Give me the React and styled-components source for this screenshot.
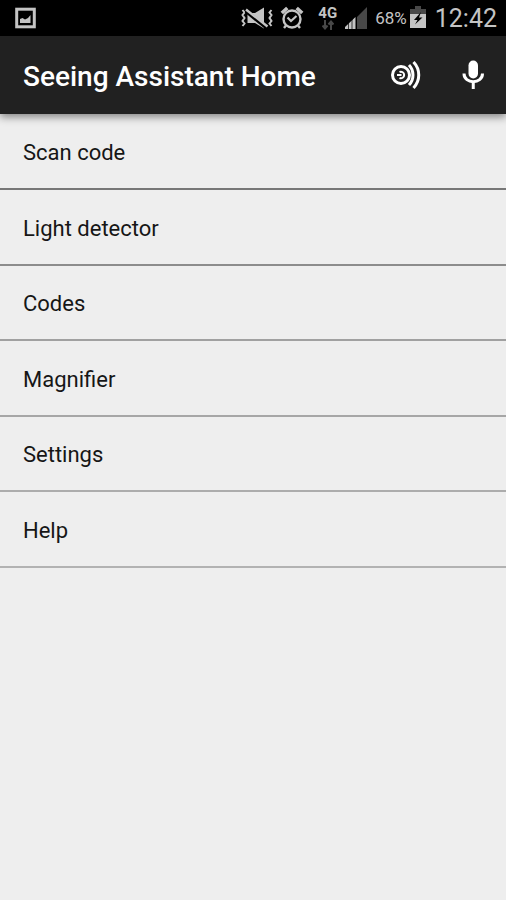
import React from 'react'
import styled, { createGlobalStyle } from 'styled-components'

const GlobalStyle = createGlobalStyle`
  body {
    margin: 0;
    background-color: #eeeeee;
    font-family: Roboto, 'Liberation Sans', sans-serif;
  }
`

const Screen = styled.div`
  min-height: 100vh;
  background-color: #eeeeee;
`

const StatusBar = styled.div`
  display: flex;
  align-items: center;
  height: 36px;
  padding: 0 9px 0 14px;
  background-color: #000000;
  color: #c4c4c4;
`

const StatusIcons = styled.div`
  display: flex;
  align-items: center;
  gap: 7px;
  margin-left: auto;
`

const Network = styled.div`
  display: flex;
  flex-direction: column;
  align-items: center;
  margin-left: 7px;
  font-size: 15px;
  font-weight: 700;
  line-height: 14px;
`

const Battery = styled.div`
  display: flex;
  align-items: center;
  gap: 3px;
  font-size: 17px;
`

const Clock = styled.time`
  margin-left: 2px;
  padding-top: 2px;
  font-size: 25px;
  line-height: 34px;
`

const AppBar = styled.header`
  position: relative;
  display: flex;
  align-items: center;
  gap: 36px;
  height: 78px;
  padding: 0 18px 0 23px;
  background-color: #212121;
  color: #ffffff;
  box-shadow: 0 3px 8px rgba(0, 0, 0, 0.45);
`

const Title = styled.h1`
  flex: 1;
  margin: 0;
  padding-top: 2px;
  font-size: 28px;
  font-weight: 500;
  white-space: nowrap;
`

const IconButton = styled.button`
  display: flex;
  padding: 0;
  border: none;
  background: none;
  color: inherit;
  cursor: pointer;
`

const Menu = styled.ul`
  margin: 0;
  padding: 1px 0 0;
  list-style: none;
`

const MenuItem = styled.li`
  height: 75px;
  box-sizing: border-box;
  border-bottom: 2px solid ${props => props.$line};

  &:nth-child(even) {
    height: 76px;
  }
`

const MenuLink = styled.a`
  display: flex;
  align-items: center;
  height: 100%;
  padding: 2px 23px 0;
  box-sizing: border-box;
  color: #161616;
  font-size: 22px;
  text-decoration: none;
`

const PictureIcon = () => (
  <svg width='22' height='22' viewBox='0 0 22 22' aria-hidden='true'>
    <rect x='2.7' y='2.2' width='17.6' height='17.6' fill='none' stroke='currentColor' strokeWidth='3' />
    <path d='M6 16v-4l2.500-1 2.500 1.500 3-1.500 2.500-3V16z' fill='currentColor' />
  </svg>
)

const VibrateMuteIcon = () => (
  <svg width='32' height='24' viewBox='1 0 32 24' fill='none' stroke='currentColor' aria-hidden='true'>
    <path d='M2.500 4l2 2.500-2 2.500 2 3-2 3 2 2.500-2 2.500M31.500 4l-2 2.500 2 2.500-2 3 2 3-2 2.500 2 2.500' strokeWidth='2' />
    <path d='M7.500 7h7.500L24 1.500v21L15 17H7.500z' fill='currentColor' stroke='none' />
    <path d='M6 5l21 17' stroke='#000000' strokeWidth='4' />
    <path d='M6 3.500l21.500 17' strokeWidth='2.400' />
  </svg>
)

const AlarmIcon = () => (
  <svg width='24' height='24' viewBox='0 0 24 24' fill='none' stroke='currentColor' aria-hidden='true'>
    <circle cx='12' cy='13' r='8.500' strokeWidth='2.400' />
    <path d='M1.800 7l5.500-5M22.200 7l-5.500-5' strokeWidth='3.600' />
    <path d='M7.500 11.500l3.500 3.500 5.500-5' strokeWidth='2.200' />
    <path d='M6 19.500l-2 2.500M18 19.500l2 2.500' strokeWidth='2.400' />
  </svg>
)

const DataArrows = () => (
  <svg width='12' height='10' viewBox='0 0 12 10' fill='none' stroke='#484848' strokeWidth='2' aria-hidden='true'>
    <path d='M3 0v8M.5 5.500L3 8.500l2.500-3M9 10V2M6.500 4.500L9 1.500l2.500 3' />
  </svg>
)

const SignalIcon = () => (
  <svg width='24' height='24' viewBox='0 0 24 24' aria-hidden='true'>
    <path d='M13 11L23 1v22H13z' fill='#484848' />
    <path d='M1 23v-2l10.500-10V23z' fill='currentColor' />
    <path d='M4.500 17v6M8 13v10' stroke='#000000' strokeWidth='.7' />
  </svg>
)

const BatteryIcon = () => (
  <svg width='16' height='24' viewBox='0 0 16 24' aria-hidden='true'>
    <path d='M5 0h6v3h5v6H0V3h5z' fill='#484848' />
    <path d='M0 8h16v14H0z' fill='currentColor' />
    <path d='M11 6l-7 8h3.500L5 18.500l7.500-7H9z' fill='#000000' />
  </svg>
)

const BeaconIcon = () => (
  <svg width='32' height='32' viewBox='0 0 32 32' fill='none' stroke='currentColor' aria-hidden='true'>
    <circle cx='11' cy='16' r='8.500' strokeWidth='3' />
    <path d='M7 16h4.500M9.500 13a3.300 3.300 0 1 1 0 6' strokeWidth='2' />
    <path d='M19 6c5.300 5.500 5.300 14.500 0 20' strokeWidth='3' />
    <path d='M23.500 3c7 7.500 7 18.500 0 26' strokeWidth='3' />
  </svg>
)

const MicIcon = () => (
  <svg width='30' height='32' viewBox='0 0 30 32' fill='none' stroke='currentColor' aria-hidden='true'>
    <rect x='10.500' y='1.500' width='9.500' height='18' rx='4.700' fill='currentColor' stroke='none' />
    <path d='M6 14.500c0 11 18.500 11 18.500 0M15.250 23v7' strokeWidth='3' />
  </svg>
)

const items = [
  { name: 'Scan code', line: '#777777' },
  { name: 'Light detector', line: '#8c8c8c' },
  { name: 'Codes', line: '#a0a0a0' },
  { name: 'Magnifier', line: '#a6a6a6' },
  { name: 'Settings', line: '#acacac' },
  { name: 'Help', line: '#b2b2b2' }
]

const App = () => {
  return (
    <Screen>
      <GlobalStyle />
      <StatusBar>
        <PictureIcon />
        <StatusIcons>
          <VibrateMuteIcon />
          <AlarmIcon />
          <Network>
            4G
            <DataArrows />
          </Network>
          <SignalIcon />
          <Battery>
            68%
            <BatteryIcon />
          </Battery>
          <Clock>12:42</Clock>
        </StatusIcons>
      </StatusBar>

      <AppBar>
        <Title>Seeing Assistant Home</Title>
        <IconButton aria-label='Beacons'>
          <BeaconIcon />
        </IconButton>
        <IconButton aria-label='Voice command'>
          <MicIcon />
        </IconButton>
      </AppBar>

      <nav>
        <Menu>
          {items.map(item => (
            <MenuItem key={item.name} $line={item.line}>
              <MenuLink href='#'>{item.name}</MenuLink>
            </MenuItem>
          ))}
        </Menu>
      </nav>
    </Screen>
  )
}

export default App
